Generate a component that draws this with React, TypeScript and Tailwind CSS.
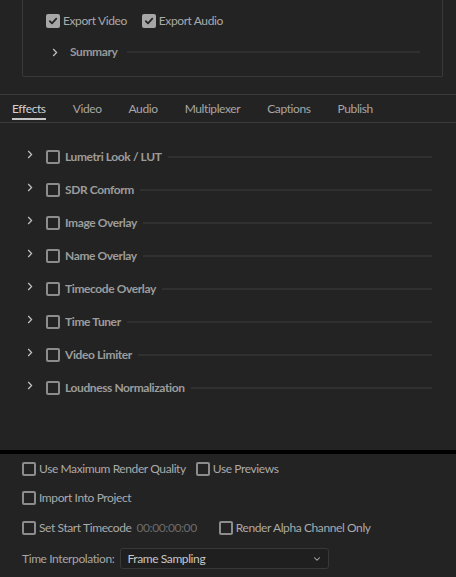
import { ChevronDown } from "lucide-react"

const effects = [
  "Lumetri Look / LUT",
  "SDR Conform",
  "Image Overlay",
  "Name Overlay",
  "Timecode Overlay",
  "Time Tuner",
  "Video Limiter",
  "Loudness Normalization",
]

const tabs = ["Effects", "Video", "Audio", "Multiplexer", "Captions", "Publish"]

function Chevron({ className = "" }: { className?: string }) {
  return (
    <svg width="6" height="9" viewBox="0 0 6 9" fill="none" className={className}>
      <path d="M1.2 1 L4.6 4.5 L1.2 8" stroke="#c4c4c4" strokeWidth="1.2" />
    </svg>
  )
}

function Box({ checked = false }: { checked?: boolean }) {
  if (checked) {
    return (
      <span className="flex h-[14px] w-[14px] shrink-0 items-center justify-center rounded-[2px] bg-[#a6a6a6]">
        <svg width="10" height="10" viewBox="0 0 10 10" fill="none">
          <path d="M1.8 5.2 L4 7.4 L8.3 2.6" stroke="#262626" strokeWidth="1.8" strokeLinecap="round" strokeLinejoin="round" />
        </svg>
      </span>
    )
  }
  return <span className="block h-[14px] w-[14px] shrink-0 rounded-[2px] border-2 border-[#8c8c8c]" />
}

function Option({ label, checked }: { label: string; checked?: boolean }) {
  return (
    <label className="flex items-center gap-[3px]">
      <Box checked={checked} />
      <span className="text-[12px] text-[#aaaaaa]">{label}</span>
    </label>
  )
}

export default function App() {
  return (
    <div className="flex h-[577px] w-[456px] flex-col overflow-hidden bg-[#232323] font-['Lato','Open_Sans',sans-serif] leading-none tracking-[-0.4px]">
      {/* top section */}
      <div className="h-[94px] shrink-0 pl-[22px] pr-[13px]">
        <div className="h-[77px] rounded-b-[2px] border-x border-b border-[#393939] pl-[23px] pr-[22px]">
          <div className="flex gap-[15px] pt-[14px]">
            <Option label="Export Video" checked />
            <Option label="Export Audio" checked />
          </div>
          <div className="mt-[18px] flex items-center">
            <Chevron className="ml-[6px]" />
            <span className="ml-[12px] text-[12px] font-bold text-[#999999]">Summary</span>
            <span className="ml-[10px] h-[2px] flex-1 bg-[#2f2f2f]" />
          </div>
        </div>
      </div>
      <div className="h-px shrink-0 bg-[#3a3a3a]" />

      {/* tabs */}
      <div className="flex h-[28px] shrink-0 items-stretch gap-[27px] border-b border-[#3a3a3a] px-[12px]">
        {tabs.map((t, i) => (
          <div key={t} className="relative flex items-center pt-[1px]">
            <span className={`text-[12px] ${i === 0 ? "text-[#d2d2d2]" : "text-[#a6a6a6]"}`}>{t}</span>
            {i === 0 ? <span className="absolute bottom-[2px] left-0 right-0 h-[2px] bg-[#c6c6c6]" /> : null}
          </div>
        ))}
      </div>

      {/* effects list */}
      <div className="flex flex-1 flex-col pt-[17px]">
        {effects.map((e) => (
          <div key={e} className="flex h-[33px] items-center">
            <Chevron className="mb-[5px] ml-[27px]" />
            <span className="ml-[13px]">
              <Box />
            </span>
            <span className="ml-[5px] text-[12px] font-bold text-[#9c9c9c]">{e}</span>
            <span className="ml-[6px] mr-[24px] h-[2px] flex-1 bg-[#303030]" />
          </div>
        ))}
      </div>

      {/* bottom options */}
      <div className="h-[4px] shrink-0 bg-black" />
      <div className="flex h-[123px] shrink-0 flex-col px-[22px] pt-[8px]">
        <div className="flex h-[14px] items-center">
          <Option label="Use Maximum Render Quality" />
          <span className="ml-[10px]">
            <Option label="Use Previews" />
          </span>
        </div>
        <div className="mt-[15px] flex h-[14px] items-center">
          <Option label="Import Into Project" />
        </div>
        <div className="mt-[16px] flex h-[14px] items-center">
          <Option label="Set Start Timecode" />
          <span className="ml-[5px] text-[12px] text-[#6c6c6c]">00:00:00:00</span>
          <span className="ml-[22px]">
            <Option label="Render Alpha Channel Only" />
          </span>
        </div>
        <div className="mt-[13px] flex items-center">
          <span className="text-[12px] text-[#a6a6a6]">Time Interpolation:</span>
          <div className="ml-[6px] flex h-[21px] w-[209px] items-center justify-between rounded-[3px] border border-[#383838] bg-[#1f1f1f] pl-[6px] pr-[6px]">
            <span className="text-[12px] text-[#c8c8c8]">Frame Sampling</span>
            <ChevronDown className="h-[10px] w-[10px] text-[#b0b0b0]" strokeWidth={2.5} />
          </div>
        </div>
      </div>
    </div>
  )
}
